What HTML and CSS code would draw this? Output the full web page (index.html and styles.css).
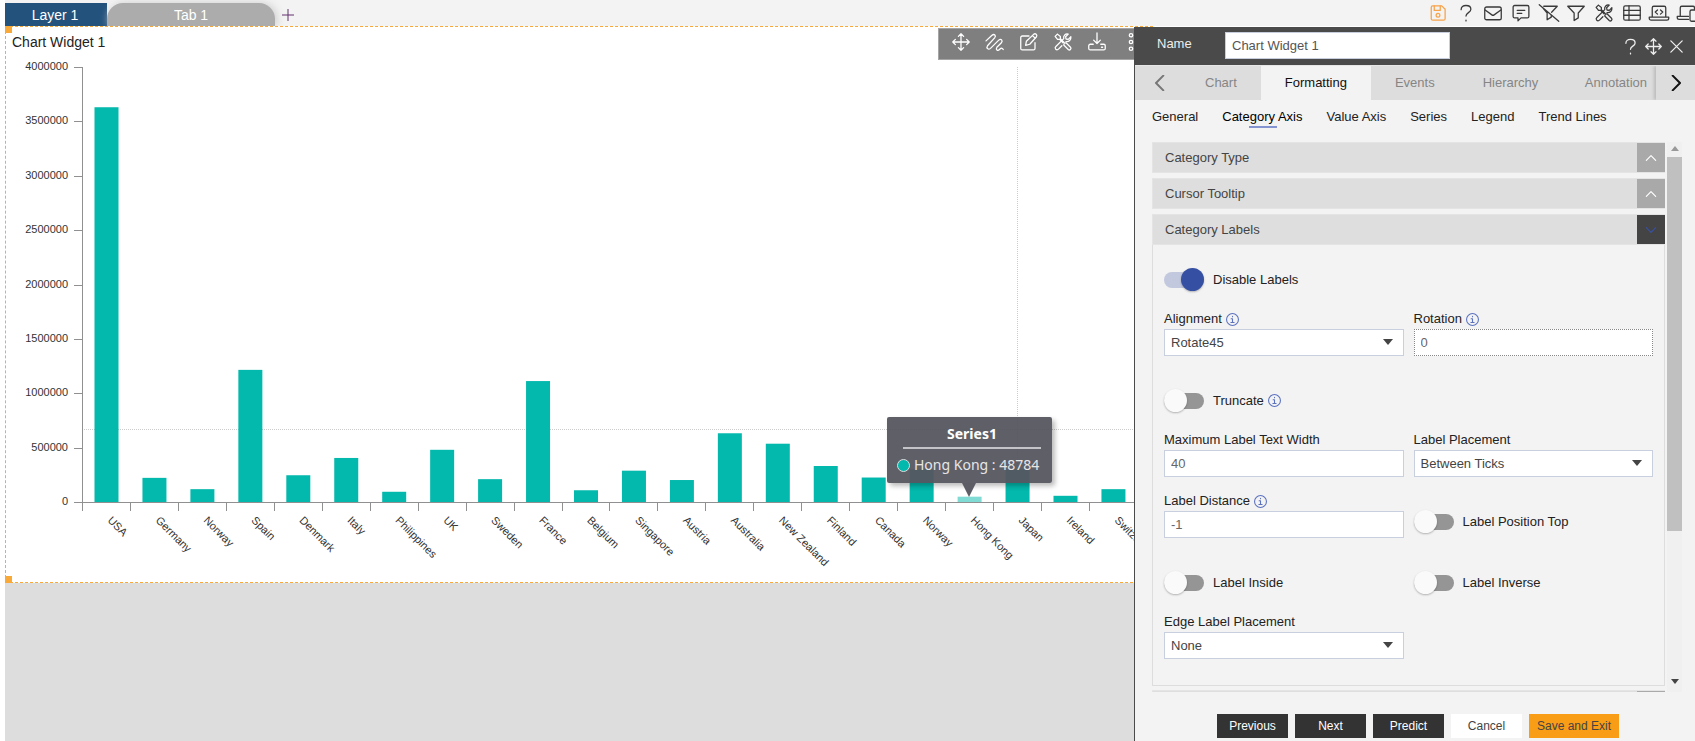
FILE: index.html
```html
<!DOCTYPE html>
<html lang="en">
<head>
<meta charset="utf-8">
<title>Dashboard Designer</title>
<link rel="stylesheet" href="styles.css">
</head>
<body>
<svg class="sprite" aria-hidden="true">
  <symbol id="i-save" viewBox="0 0 24 24"><path d="M5 2.500h12l4.500 4.500v12.500a2 2 0 0 1-2 2H5a2 2 0 0 1-2-2v-15a2 2 0 0 1 2-2z"/><path d="M7 2.500v6h8v-6"/><circle cx="12" cy="15" r="2.500"/></symbol>
  <symbol id="i-help" viewBox="0 0 24 24"><path d="M5.500 7.500C5.500 4 8 2 12 2s6.500 2 6.500 5c0 4.500-6.500 4.500-6.500 9"/><path d="M12 21.500v1"/></symbol>
  <symbol id="i-mail" viewBox="0 0 24 24"><rect x="1" y="4" width="22" height="17" rx="2.500"/><path d="M1.500 8l9 6.500c1 .7 2 .7 3 0l9-6.500"/></symbol>
  <symbol id="i-note" viewBox="0 0 24 24"><path d="M3.500 2h17a2 2 0 0 1 2 2v12.500a2 2 0 0 1-2 2H12l-4 4v-4H3.500a2 2 0 0 1-2-2V4a2 2 0 0 1 2-2z"/><path d="M7 8.500h10M7 12.500h6"/></symbol>
  <symbol id="i-filter" viewBox="0 0 24 24"><path d="M1 3h22L15 12v6.500L9.500 22V12z"/></symbol>
  <symbol id="i-filter-off" viewBox="0 0 24 24"><path d="M-1 1l26 22M5 3h18l-7.500 8M4 5.500l5.500 6.500v9l5.500-3.500v-2.500"/></symbol>
  <symbol id="i-tools" viewBox="0 0 24 24"><path d="M4.500 1.500l4 3.200v2.800l5 5M1.500 4.500l3.200 4h2.800l4.500 4.500M1.500 4.500l3-3M14.500 13.500l1.500-.5 6 6c1.800 2-1 4.800-3 3l-6-6 .5-1.500"/><path d="M22.500 5L19 8.500l-3-.5-.5-3L19 1.500c-3.500-1-7 2-6 6L2.500 18c-2.500 2.500 1 6 3.500 3.500L10.500 17M16 11.500c4 .5 7-2.500 6.500-6.500"/></symbol>
  <symbol id="i-table" viewBox="0 0 24 24"><rect x="1" y="2.500" width="22" height="19" rx="2"/><path d="M1 8.500h22M1 15h22M8 2.500v19"/></symbol>
  <symbol id="i-code" viewBox="0 0 24 24"><path d="M3 17.500V5a2 2 0 0 1 2-2h14a2 2 0 0 1 2 2v12.500M-1 17.500h26v1.500a2.500 2.500 0 0 1-2.500 2.500h-21A2.500 2.500 0 0 1-1 19z"/><path d="M10 8l-3 2.700 3 2.800M14 8l3 2.700-3 2.800"/></symbol>
  <symbol id="i-devices" viewBox="0 0 24 24"><path d="M3 15.500V5a2 2 0 0 1 2-2h15a2 2 0 0 1 2 2v2M14 16.500H-1v1.500a2.500 2.500 0 0 0 2.500 2.500H14"/><rect x="16" y="8" width="12" height="15" rx="2"/></symbol>
  <symbol id="i-move" viewBox="0 0 24 24"><path d="M12 1v22M1 12h22M8.500 4.500L12 1l3.500 3.500M8.500 19.500L12 23l3.500-3.500M4.500 8.500L1 12l3.500 3.500M19.500 8.500L23 12l-3.500 3.500"/></symbol>
  <symbol id="i-wave" viewBox="0 0 24 24"><path d="M0 10.500L8 3c3-2.500 6 .5 3.500 3.500L2 17c-2 3 1 6 4 3.500L17 9.500c3-2.500 6 .5 3.500 3.500l-6 6c-2 3 1 5.500 3.500 3l1-1c1.500-1.500 3-.5 4 1"/></symbol>
  <symbol id="i-edit" viewBox="0 0 24 24"><path d="M12 4H3a2 2 0 0 0-2 2v14.500a2 2 0 0 0 2 2h15a2 2 0 0 0 2-2V13"/><path d="M7.500 16.500l1-5.500L18.500 1.500c2-1.500 5 1 3.500 3.500L13 15zM16.500 3.500L20.500 7"/></symbol>
  <symbol id="i-download" viewBox="0 0 24 24"><path d="M12 0v14M7.500 9.500L12 14l4.500-4.500M7 15H3a2 2 0 0 0-2 2v3.500a2 2 0 0 0 2 2h18a2 2 0 0 0 2-2V17a2 2 0 0 0-2-2h-4M18 19h1.500"/></symbol>
  <symbol id="i-dots" viewBox="0 0 24 24"><circle cx="12" cy="3" r="2.300"/><circle cx="12" cy="12" r="2.300"/><circle cx="12" cy="21" r="2.300"/></symbol>
  <symbol id="i-close" viewBox="0 0 24 24"><path d="M4 4l16 16M20 4L4 20"/></symbol>
  <symbol id="i-info" viewBox="0 0 24 24"><circle cx="12" cy="12" r="11"/><path d="M9.500 10.500H12V17M9 17.500h6M12 6v1"/></symbol>
  <symbol id="i-up" viewBox="0 0 24 24"><path d="M4 16l8-8 8 8"/></symbol>
  <symbol id="i-down" viewBox="0 0 24 24"><path d="M4 8l8 8 8-8"/></symbol>
  <symbol id="i-left" viewBox="0 0 24 24"><path d="M17 1L6 12l11 11"/></symbol>
  <symbol id="i-right" viewBox="0 0 24 24"><path d="M7 1l11 11L7 23"/></symbol>
</svg>

<header class="topbar">
  <nav class="layers">
    <button class="layer">Layer 1</button>
    <button class="sheet">Tab 1</button>
    <button class="add" aria-label="Add tab"><svg viewBox="0 0 12 12"><path d="M6 0v12M0 6h12"/></svg></button>
  </nav>
  <div class="actions">
    <button class="save" aria-label="Save"><svg><use href="#i-save"/></svg></button>
    <button aria-label="Help"><svg><use href="#i-help"/></svg></button>
    <button aria-label="Mail"><svg><use href="#i-mail"/></svg></button>
    <button aria-label="Comments"><svg><use href="#i-note"/></svg></button>
    <button aria-label="Clear filter"><svg><use href="#i-filter-off"/></svg></button>
    <button aria-label="Filter"><svg><use href="#i-filter"/></svg></button>
    <button aria-label="Tools"><svg><use href="#i-tools"/></svg></button>
    <button aria-label="Table"><svg><use href="#i-table"/></svg></button>
    <button aria-label="Code"><svg><use href="#i-code"/></svg></button>
    <button aria-label="Devices"><svg><use href="#i-devices"/></svg></button>
  </div>
</header>

<div class="workspace">
  <main class="stage">
    <section class="widget">
      <h1 class="widget-title">Chart Widget 1</h1>
      <svg id="chart" class="chart" viewBox="6 54 1147 528" width="1147" height="528" role="img" aria-label="Bar chart by country"></svg>
      <i class="handle top"></i><i class="handle bottom"></i>
    </section>
    <div class="tools">
      <button aria-label="Move"><svg><use href="#i-move"/></svg></button>
      <button aria-label="Draw"><svg><use href="#i-wave"/></svg></button>
      <button aria-label="Edit"><svg><use href="#i-edit"/></svg></button>
      <button aria-label="Settings"><svg><use href="#i-tools"/></svg></button>
      <button aria-label="Download"><svg><use href="#i-download"/></svg></button>
      <button aria-label="More"><svg><use href="#i-dots"/></svg></button>
    </div>
    <div class="tooltip">
      <strong>Series1</strong>
      <p><i></i>Hong Kong : 48784</p>
    </div>
  </main>

  <aside class="panel">
    <div class="panel-head">
      <label for="wname">Name</label>
      <input id="wname" value="Chart Widget 1">
      <div class="panel-actions">
        <button aria-label="Help"><svg><use href="#i-help"/></svg></button>
        <button aria-label="Move panel"><svg><use href="#i-move"/></svg></button>
        <button aria-label="Close"><svg><use href="#i-close"/></svg></button>
      </div>
    </div>
    <nav class="tabs">
      <button class="prev" aria-label="Scroll left"><svg><use href="#i-left"/></svg></button>
      <button class="tab">Chart</button>
      <button class="tab active">Formatting</button>
      <button class="tab">Events</button>
      <button class="tab">Hierarchy</button>
      <button class="tab">Annotation</button>
      <button class="next" aria-label="Scroll right"><svg><use href="#i-right"/></svg></button>
    </nav>
    <nav class="subtabs">
      <a href="#">General</a>
      <a href="#" class="current">Category Axis</a>
      <a href="#">Value Axis</a>
      <a href="#">Series</a>
      <a href="#">Legend</a>
      <a href="#">Trend Lines</a>
    </nav>
    <div class="scroller">
      <div class="sections">
        <button class="section"><span>Category Type</span><i><svg><use href="#i-up"/></svg></i></button>
        <button class="section"><span>Cursor Tooltip</span><i><svg><use href="#i-up"/></svg></i></button>
        <button class="section open"><span>Category Labels</span><i><svg><use href="#i-down"/></svg></i></button>
        <form class="fields">
          <label class="toggle wide"><input type="checkbox" checked>Disable Labels</label>
          <div class="field">
            <label for="align">Alignment<svg><use href="#i-info"/></svg></label>
            <div class="pick"><select id="align"><option>Rotate45</option></select></div>
          </div>
          <div class="field">
            <label for="rot">Rotation<svg><use href="#i-info"/></svg></label>
            <input id="rot" value="0" disabled>
          </div>
          <label class="toggle wide"><input type="checkbox">Truncate<svg><use href="#i-info"/></svg></label>
          <div class="field">
            <label for="maxw">Maximum Label Text Width</label>
            <input id="maxw" value="40">
          </div>
          <div class="field">
            <label for="place">Label Placement</label>
            <div class="pick"><select id="place"><option>Between Ticks</option></select></div>
          </div>
          <div class="field">
            <label for="dist">Label Distance<svg><use href="#i-info"/></svg></label>
            <input id="dist" value="-1">
          </div>
          <label class="toggle"><input type="checkbox">Label Position Top</label>
          <label class="toggle"><input type="checkbox">Label Inside</label>
          <label class="toggle"><input type="checkbox">Label Inverse</label>
          <div class="field">
            <label for="edge">Edge Label Placement</label>
            <div class="pick"><select id="edge"><option>None</option></select></div>
          </div>
        </form>
        <button class="section" aria-label="Next section"><i></i></button>
      </div>
      <div class="scrollbar"><i class="up"></i><i class="thumb"></i><i class="down"></i></div>
    </div>
    <footer class="buttons">
      <button class="dark">Previous</button>
      <button class="dark">Next</button>
      <button class="dark">Predict</button>
      <button class="plain">Cancel</button>
      <button class="accent">Save and Exit</button>
    </footer>
  </aside>
</div>
<script src="chart.js"></script>
</body>
</html>
```

FILE: styles.css
```css
* { box-sizing: border-box; }
body {
  margin: 0;
  height: 100vh;
  display: flex;
  flex-direction: column;
  overflow: hidden;
  background: #fff;
  color: #333;
  font: 13px/16px "Liberation Sans", Arial, sans-serif;
}
button { border: 0; padding: 0; background: none; color: inherit; font: inherit; }
a { color: inherit; text-decoration: none; }
input, select { font: inherit; }
svg { fill: none; stroke: currentColor; stroke-width: 2; stroke-linecap: round; stroke-linejoin: round; }
symbol { overflow: visible; }
.sprite { position: absolute; width: 0; height: 0; }

/* top bar */
.topbar {
  flex: none;
  height: 26px;
  margin-left: 5px;
  display: flex;
  justify-content: space-between;
  align-items: flex-end;
  background: #f3f3f3;
}
.layers { display: flex; height: 23px; font-size: 14px; color: #fff; }
.layer { width: 102px; padding-right: 2px; background: #23527c; }
.sheet { width: 168px; background: #acacac; border-radius: 16px 16px 0 0; box-shadow: 2px 0 8px #ccc; }
.add { width: 26px; color: #62306f; }
.add svg { width: 12px; height: 12px; stroke-width: 1; display: block; margin: 0 auto; }
.actions {
  width: 267px;
  height: 25px;
  margin: 0 -1px 1px 0;
  display: flex;
  justify-content: space-between;
  align-items: center;
  color: #3a3a3a;
}
.actions svg, .tools svg { width: 18px; height: 18px; stroke-width: 1.7; display: block; overflow: visible; }
.actions .save { color: #f8a34b; }

/* canvas */
.workspace { flex: 1; min-height: 0; display: flex; }
.stage { flex: 1; min-width: 0; margin-left: 5px; position: relative; background: #ddd; }
.widget { position: relative; margin-right: -19px; background: #fff; border: 1px dashed #f9a938; }
.widget-title { margin: 0; padding: 7px 6px 4px; font-size: 14px; font-weight: 400; line-height: 16px; color: #222; }
.chart { display: block; max-width: none; stroke: none; }
.chart text { fill: #333; font-size: 11px; }
.chart .axis { stroke: #909090; stroke-width: 1; shape-rendering: crispEdges; }
.chart .guide { stroke: #ccc; stroke-width: 1; stroke-dasharray: 1 1; stroke-linecap: butt; shape-rendering: crispEdges; }
.chart .bar { fill: #03b8ac; }
.chart .hover { fill: #80dbd5; }
.handle { position: absolute; left: -1px; width: 7px; height: 7px; background: #f9a938; }
.handle.top { top: -1px; }
.handle.bottom { bottom: -1px; }
.tools {
  position: absolute;
  top: 2px;
  right: 0;
  width: 196px;
  height: 32px;
  padding: 0 0 4px 13px;
  display: flex;
  align-items: center;
  gap: 16px;
  overflow: hidden;
  background: #7f7f7f;
  border: 1px solid #a5a5a5;
  border-right: 0;
  color: #fff;
}
.tooltip {
  position: absolute;
  left: 882px;
  top: 391px;
  width: 165px;
  height: 66px;
  padding: 6px 11px 6px 10px;
  border-radius: 2px;
  background: #55555ff0;
  box-shadow: 3px 3px 5px #0004;
  color: #e6e6e6;
  font: 14px/20px "Noto Sans", sans-serif;
}
.tooltip::after {
  content: "";
  position: absolute;
  left: 75px;
  top: 66px;
  border: 7px solid transparent;
  border-top: 14px solid #5d5d66;
  border-bottom: 0;
}
.tooltip strong { display: block; margin: 0 0 0 6px; height: 26px; padding-top: 1px; border-bottom: 2px solid #c4c4c8; color: #fff; text-align: center; }
.tooltip p { margin: 6px 0 0; display: flex; align-items: center; gap: 4px; white-space: nowrap; }
.tooltip i { width: 13px; height: 13px; border: 1px solid #ddd; border-radius: 50%; background: #03b8ac; }

/* settings panel */
.panel {
  flex: none;
  width: 561px;
  margin-top: 1px;
  position: relative;
  display: flex;
  flex-direction: column;
  border-left: 1px solid #4a4a4a;
  background: #f3f3f3;
}
.panel-head { height: 38px; padding: 0 10px 0 22px; display: flex; align-items: center; background: #4a4a4a; color: #eee; }
.panel-head label { width: 68px; padding-bottom: 4px; }
.panel-head input { width: 225px; height: 27px; margin-bottom: 1px; padding: 0 6px; border: 1px solid #c9cede; color: #555; }
.panel-actions { margin-left: auto; display: flex; align-items: center; gap: 6px; }
.panel-actions svg { display: block; width: 17px; height: 17px; stroke-width: 1.8; }
.tabs { height: 35px; display: flex; background: #ddd; border-top: 1px solid #e6e6e6; color: #858585; }
.tab { padding: 0 24px; }
.tab:nth-last-child(2) { padding: 0 9px 0 22px; margin-left: auto; }
.tab.active { background: #f3f3f3; color: #111; }
.prev { width: 46px; padding-left: 3px; color: #777; }
.next { width: 39px; color: #111; box-shadow: -2px 0 3px #bbb; clip-path: inset(0 0 0 -6px); }
.prev svg, .next svg { width: 16px; height: 16px; stroke-width: 3; display: block; margin: 0 auto; }
.subtabs { padding: 9px 17px 0; height: 42px; display: flex; gap: 24px; color: #222; }
.subtabs .current { position: relative; color: #000; }
.subtabs .current::after { content: ""; position: absolute; left: 27px; top: 17px; width: 28px; height: 2px; background: #8494d0; }

.scroller { flex: 1; min-height: 0; display: flex; gap: 2px; padding: 0 13px 0 17px; }
.sections { flex: 1; display: flex; flex-direction: column; overflow: hidden; }
.section {
  flex: none;
  height: 31px;
  margin-bottom: 5px;
  padding-left: 12px;
  display: flex;
  justify-content: space-between;
  align-items: center;
  border: 1px solid #e4e4e4;
  border-right: 0;
  background: #dedede;
  color: #444;
}
.section i { width: 28px; align-self: stretch; margin-left: auto; display: grid; place-items: center; background: #a9a9a9; color: #fff; }
.section svg { width: 14px; height: 14px; }
.section.open { margin-bottom: 0; }
.section.open i { background: #444; color: #3850a4; }
.fields {
  flex: none;
  margin-bottom: 4px;
  padding: 4px 11px 12px;
  display: grid;
  grid-template-columns: 1fr 1fr;
  column-gap: 10px;
  border: 1px solid #ddd;
  border-top: 0;
  color: #222;
}
.field { margin-bottom: 14px; }
.field > label { display: flex; align-items: center; height: 20px; }
.field > label svg, .toggle svg { width: 13px; height: 13px; margin-left: 4px; overflow: visible; color: #5b72c0; }
.field input, .field select {
  display: block;
  width: 100%;
  height: 27px;
  padding: 0 6px;
  border: 1px solid #c8cfdf;
  border-radius: 0;
  background: #fff;
  color: #666;
}
.field select { appearance: none; color: #444; }
.field input:disabled { border: 1px dotted #888; }
.pick { position: relative; }
.pick::after { content: ""; position: absolute; right: 11px; top: 10px; border: 5px solid transparent; border-top: 6px solid #444; border-bottom: 0; }
.toggle { height: 23px; margin: 19px 0 18px; display: flex; align-items: center; }
.toggle.wide { grid-column: 1 / -1; }
.toggle input { appearance: none; width: 40px; height: 16px; margin: 0 9px 0 0; border-radius: 8px; background: #959595; display: flex; align-items: center; }
.toggle input::before { content: ""; flex: none; width: 23px; height: 23px; border-radius: 50%; background: #fafafa; box-shadow: 0 1px 2px #0004; }
.toggle input:checked { background: #c2c8de; justify-content: flex-end; }
.toggle input:checked::before { background: #3550a3; }

.scrollbar { width: 15px; display: flex; flex-direction: column; align-items: center; background: #f0f0f0; }
.scrollbar .up { margin: 4px 0 6px; border: 4px solid transparent; border-bottom: 5px solid #999; border-top: 0; }
.scrollbar .thumb { flex: 0 1 68%; width: 15px; background: #c0c0c0; }
.scrollbar .down { margin: auto 0 8px; border: 4px solid transparent; border-top: 5px solid #444; border-bottom: 0; }
.buttons { padding: 22px 76px 3px; display: flex; justify-content: flex-end; gap: 7px; font-size: 12px; }
.buttons button { width: 71px; height: 24px; }
.buttons .dark { background: #333; color: #fff; }
.buttons .plain { background: #fff; color: #444; }
.buttons .accent { width: 90px; background: #f99d16; color: #444; }
```

FILE: chart.js
```js
(() => {
  const data = [
    ["USA", 3630000], ["Germany", 222000], ["Norway", 118000], ["Spain", 1215000],
    ["Denmark", 246000], ["Italy", 405000], ["Philippines", 94000], ["UK", 480000],
    ["Sweden", 210000], ["France", 1112000], ["Belgium", 108000], ["Singapore", 288000],
    ["Austria", 202000], ["Australia", 632000], ["New Zealand", 536000], ["Finland", 331000],
    ["Canada", 225000], ["Norway", 300000], ["Hong Kong", 48784], ["Japan", 300000],
    ["Ireland", 57000], ["Switzerland", 118000]
  ];
  const left = 82, base = 502, ceiling = 67, max = 4000000;
  const step = 47.95;
  const chart = document.getElementById("chart");
  const toY = v => base - v / max * (base - ceiling);

  function add(tag, attrs, text) {
    const node = document.createElementNS("http://www.w3.org/2000/svg", tag);
    for (const key in attrs) node.setAttribute(key, attrs[key]);
    if (text !== undefined) node.textContent = text;
    chart.appendChild(node);
  }

  add("path", { class: "guide", d: `M${left} 429.5H1153M1017.5 ${ceiling}V${base}` });
  data.forEach(([name, value], i) => {
    const x = left + step * i;
    const y = toY(value);
    add("rect", { class: name === "Hong Kong" ? "bar hover" : "bar", x: x + 12.5, y, width: 24, height: base - y });
    add("path", { class: "axis", d: `M${Math.round(x) + 0.5} ${base}v9` });
    add("text", { transform: `translate(${x + 25} 521) rotate(45)` }, name);
  });
  for (let v = 0; v <= max; v += 500000) {
    const y = Math.round(toY(v)) + 0.5;
    add("path", { class: "axis", d: `M74 ${y}h8` });
    add("text", { x: 68, y: y + 2, "text-anchor": "end" }, v);
  }
  add("path", { class: "axis", d: `M${left + 0.5} ${ceiling}V${base + 0.5}H1153` });
})();
```
